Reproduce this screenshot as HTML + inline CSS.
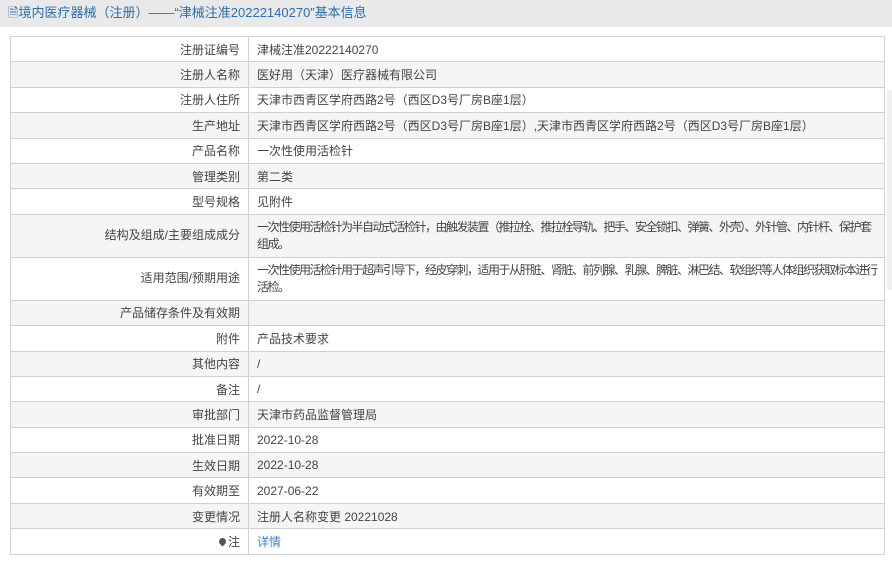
<!DOCTYPE html>
<html><head><meta charset="utf-8"><style>
*{margin:0;padding:0;box-sizing:border-box}
body{width:892px;height:563px;background:#fff;font-family:"Liberation Sans","Noto Sans CJK SC",sans-serif;font-size:12px;color:#444;overflow:hidden;position:relative}
.hd{position:absolute;left:0;top:0;width:892px;height:27px;background:#e9e9e9;color:#2a6fb0;font-size:13px;line-height:26px;padding-left:8px}
table{position:absolute;left:10px;top:36px;width:875px;border-collapse:collapse;table-layout:fixed}
td{border:1px solid #d0d0d0;height:25.4px;padding:0 8px;vertical-align:middle;white-space:nowrap;overflow:hidden}
td.l{width:238px;text-align:right;padding-right:8px}
tr:nth-child(even) td{background:#f5f5f5}
tr.t td{height:43px;line-height:17px}
tr.t td+td{letter-spacing:-1.5px}
a{color:#3a84d0;text-decoration:none}
.sb{position:absolute;left:887px;top:90px;width:5px;height:200px;background:#f0f0f0}
.pin{display:inline-block;width:7px;height:7px;background:#555;border-radius:50% 50% 50% 0;transform:rotate(-45deg);margin-right:2px;vertical-align:1px}
</style></head><body>
<div class="hd">🗎境内医疗器械（注册）——“津械注准20222140270”基本信息</div>
<table>
<tr><td class="l">注册证编号</td><td>津械注准20222140270</td></tr>
<tr><td class="l">注册人名称</td><td>医好用（天津）医疗器械有限公司</td></tr>
<tr><td class="l">注册人住所</td><td>天津市西青区学府西路2号（西区D3号厂房B座1层）</td></tr>
<tr><td class="l">生产地址</td><td>天津市西青区学府西路2号（西区D3号厂房B座1层）,天津市西青区学府西路2号（西区D3号厂房B座1层）</td></tr>
<tr><td class="l">产品名称</td><td>一次性使用活检针</td></tr>
<tr><td class="l">管理类别</td><td>第二类</td></tr>
<tr><td class="l">型号规格</td><td>见附件</td></tr>
<tr class="t"><td class="l">结构及组成/主要组成成分</td><td>一次性使用活检针为半自动式活检针，由触发装置（推拉栓、推拉栓导轨、把手、安全锁扣、弹簧、外壳）、外针管、内针杆、保护套<br>组成。</td></tr>
<tr class="t"><td class="l">适用范围/预期用途</td><td>一次性使用活检针用于超声引导下，经皮穿刺，适用于从肝脏、肾脏、前列腺、乳腺、脾脏、淋巴结、软组织等人体组织获取标本进行<br>活检。</td></tr>
<tr><td class="l">产品储存条件及有效期</td><td></td></tr>
<tr><td class="l">附件</td><td>产品技术要求</td></tr>
<tr><td class="l">其他内容</td><td>/</td></tr>
<tr><td class="l">备注</td><td>/</td></tr>
<tr><td class="l">审批部门</td><td>天津市药品监督管理局</td></tr>
<tr><td class="l">批准日期</td><td>2022-10-28</td></tr>
<tr><td class="l">生效日期</td><td>2022-10-28</td></tr>
<tr><td class="l">有效期至</td><td>2027-06-22</td></tr>
<tr><td class="l">变更情况</td><td>注册人名称变更 20221028</td></tr>
<tr><td class="l"><span class="pin"></span>注</td><td><a>详情</a></td></tr>
</table>
<div class="sb"></div>
</body></html>
